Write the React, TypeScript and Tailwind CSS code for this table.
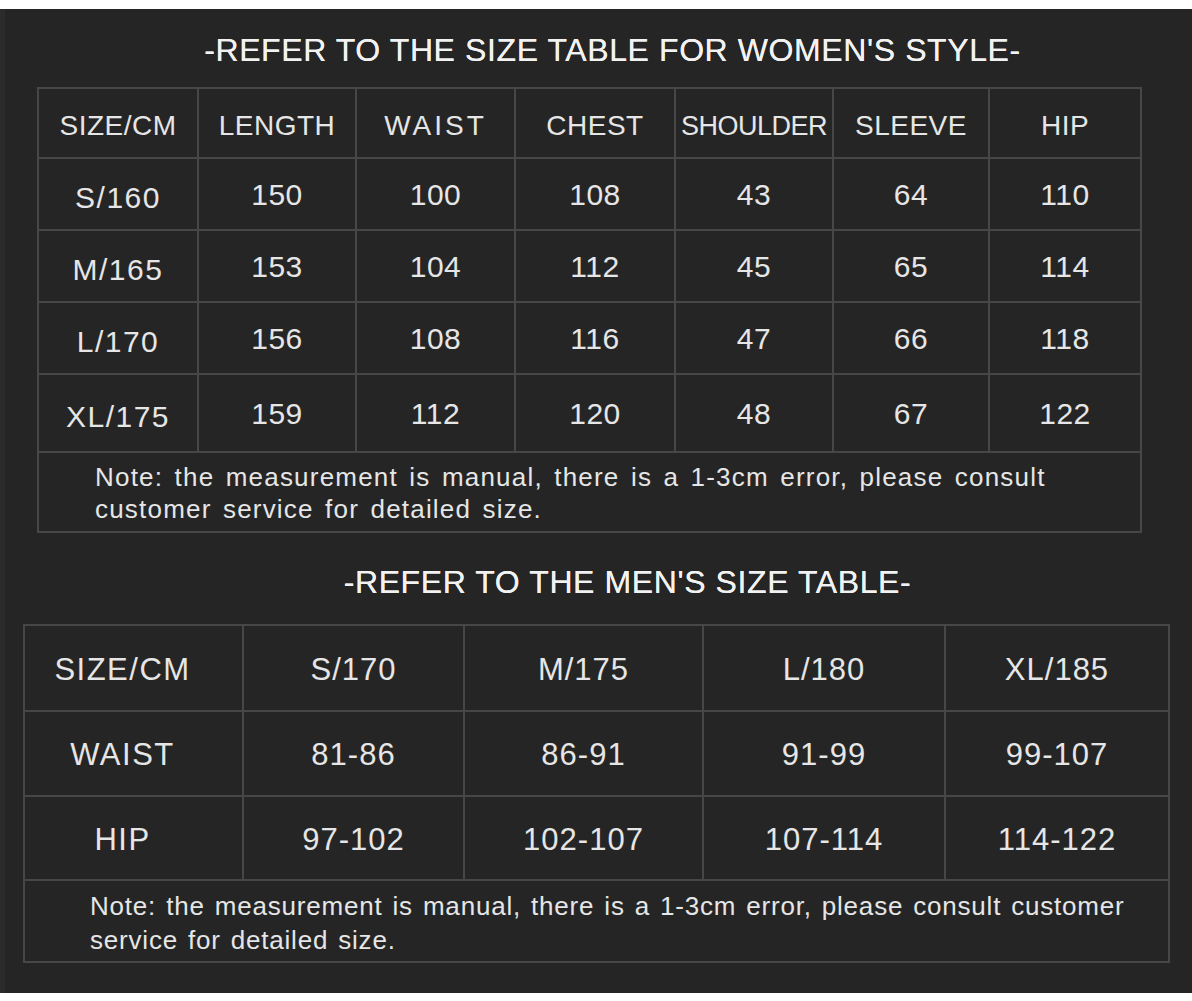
import React from 'react';

const womenCols = 'grid-cols-[160px_158px_159px_160px_158px_156px_152px]';
const womenHead = ['SIZE/CM', 'LENGTH', 'WAIST', 'CHEST', 'SHOULDER', 'SLEEVE', 'HIP'];
const womenRows = [
  { h: 'h-[72px]', cells: ['S/160', '150', '100', '108', '43', '64', '110'] },
  { h: 'h-[72px]', cells: ['M/165', '153', '104', '112', '45', '65', '114'] },
  { h: 'h-[72px]', cells: ['L/170', '156', '108', '116', '47', '66', '118'] },
  { h: 'h-[78px]', cells: ['XL/175', '159', '112', '120', '48', '67', '122'] },
];

const menRows = [
  { h: 'h-[86px]', cells: ['SIZE/CM', 'S/170', 'M/175', 'L/180', 'XL/185'] },
  { h: 'h-[85px]', cells: ['WAIST', '81-86', '86-91', '91-99', '99-107'] },
  { h: 'h-[84px]', cells: ['HIP', '97-102', '102-107', '107-114', '114-122'] },
];

const cell = 'flex items-center justify-center border-r-2 border-b-2 border-[#474747]';

// header labels that are squeezed or spread in the picture
const headClass: Record<string, string> = {
  SHOULDER: 'text-[27px] tracking-[-0.5px]',
  WAIST: 'text-[28px] tracking-[3px]',
};

const Title: React.FC<{ text: string; className: string }> = ({ text, className }) => (
  <div className={`flex h-[42px] items-center justify-center ${className}`}>
    <h2 className="text-[32px] leading-none tracking-[0.6px] text-[#f2f2f2] [text-shadow:0_0_0.6px_#f2f2f2]">
      {text}
    </h2>
  </div>
);

const WomenTable = () => (
  <div className={`ml-[37px] grid w-[1105px] ${womenCols} border-l-2 border-t-2 border-[#474747]`}>
    {womenHead.map((label) => (
      <div key={label} className={`${cell} h-[70px] pt-[6px]`}>
        <span className={headClass[label] ?? 'text-[28px] tracking-[0.5px]'}>{label}</span>
      </div>
    ))}
    {womenRows.map((row) =>
      row.cells.map((value, i) => (
        <div key={row.cells[0] + i} className={`${cell} ${row.h}`}>
          <span className={i === 0 ? 'pt-[6px] text-[30px] tracking-[1.5px]' : 'text-[30px] tracking-[0.5px]'}>
            {value}
          </span>
        </div>
      ))
    )}
    <div className="col-span-7 h-[80px] whitespace-nowrap border-r-2 border-b-2 border-[#474747] pl-[56px] pt-[8px] text-[26px] leading-[32px] tracking-[1.2px] [word-spacing:3px]">
      Note: the measurement is manual, there is a 1-3cm error, please consult
      <br />
      customer service for detailed size.
    </div>
  </div>
);

const MenTable = () => (
  <div className="ml-[23px] grid w-[1147px] grid-cols-[219px_221px_239px_242px_224px] border-l-2 border-t-2 border-[#474747]">
    {menRows.map((row) =>
      row.cells.map((value, i) => (
        <div key={row.cells[0] + i} className={`${cell} ${row.h} ${i === 0 ? 'pr-[22px]' : ''}`}>
          <span className={i === 0 ? 'pt-[4px] text-[31px] tracking-[1.5px]' : 'pt-[4px] text-[31px] tracking-[1px]'}>
            {value}
          </span>
        </div>
      ))
    )}
    <div className="col-span-5 h-[82px] whitespace-nowrap border-r-2 border-b-2 border-[#474747] pl-[65px] pt-[8px] text-[26px] leading-[34px] tracking-[0.8px] [word-spacing:2px]">
      Note: the measurement is manual, there is a 1-3cm error, please consult customer
      <br />
      service for detailed size.
    </div>
  </div>
);

export default function App() {
  return (
    <div className="h-[1001px] w-[1192px] bg-white pt-[9px] font-['Liberation_Sans',Arial,sans-serif]">
      <div className="h-[984px] border-l-[5px] border-[#2b2b2b] bg-[#252525] pt-[20px] text-[#e6e6e6]">
        <Title text="-REFER TO THE SIZE TABLE FOR WOMEN'S STYLE-" className="pl-[28px]" />
        <div className="mt-[16px] -ml-[5px]">
          <WomenTable />
        </div>
        <Title text="-REFER TO THE MEN'S SIZE TABLE-" className="mt-[28px] pl-[58px]" />
        <div className="mt-[21px] -ml-[5px]">
          <MenTable />
        </div>
      </div>
    </div>
  );
}
